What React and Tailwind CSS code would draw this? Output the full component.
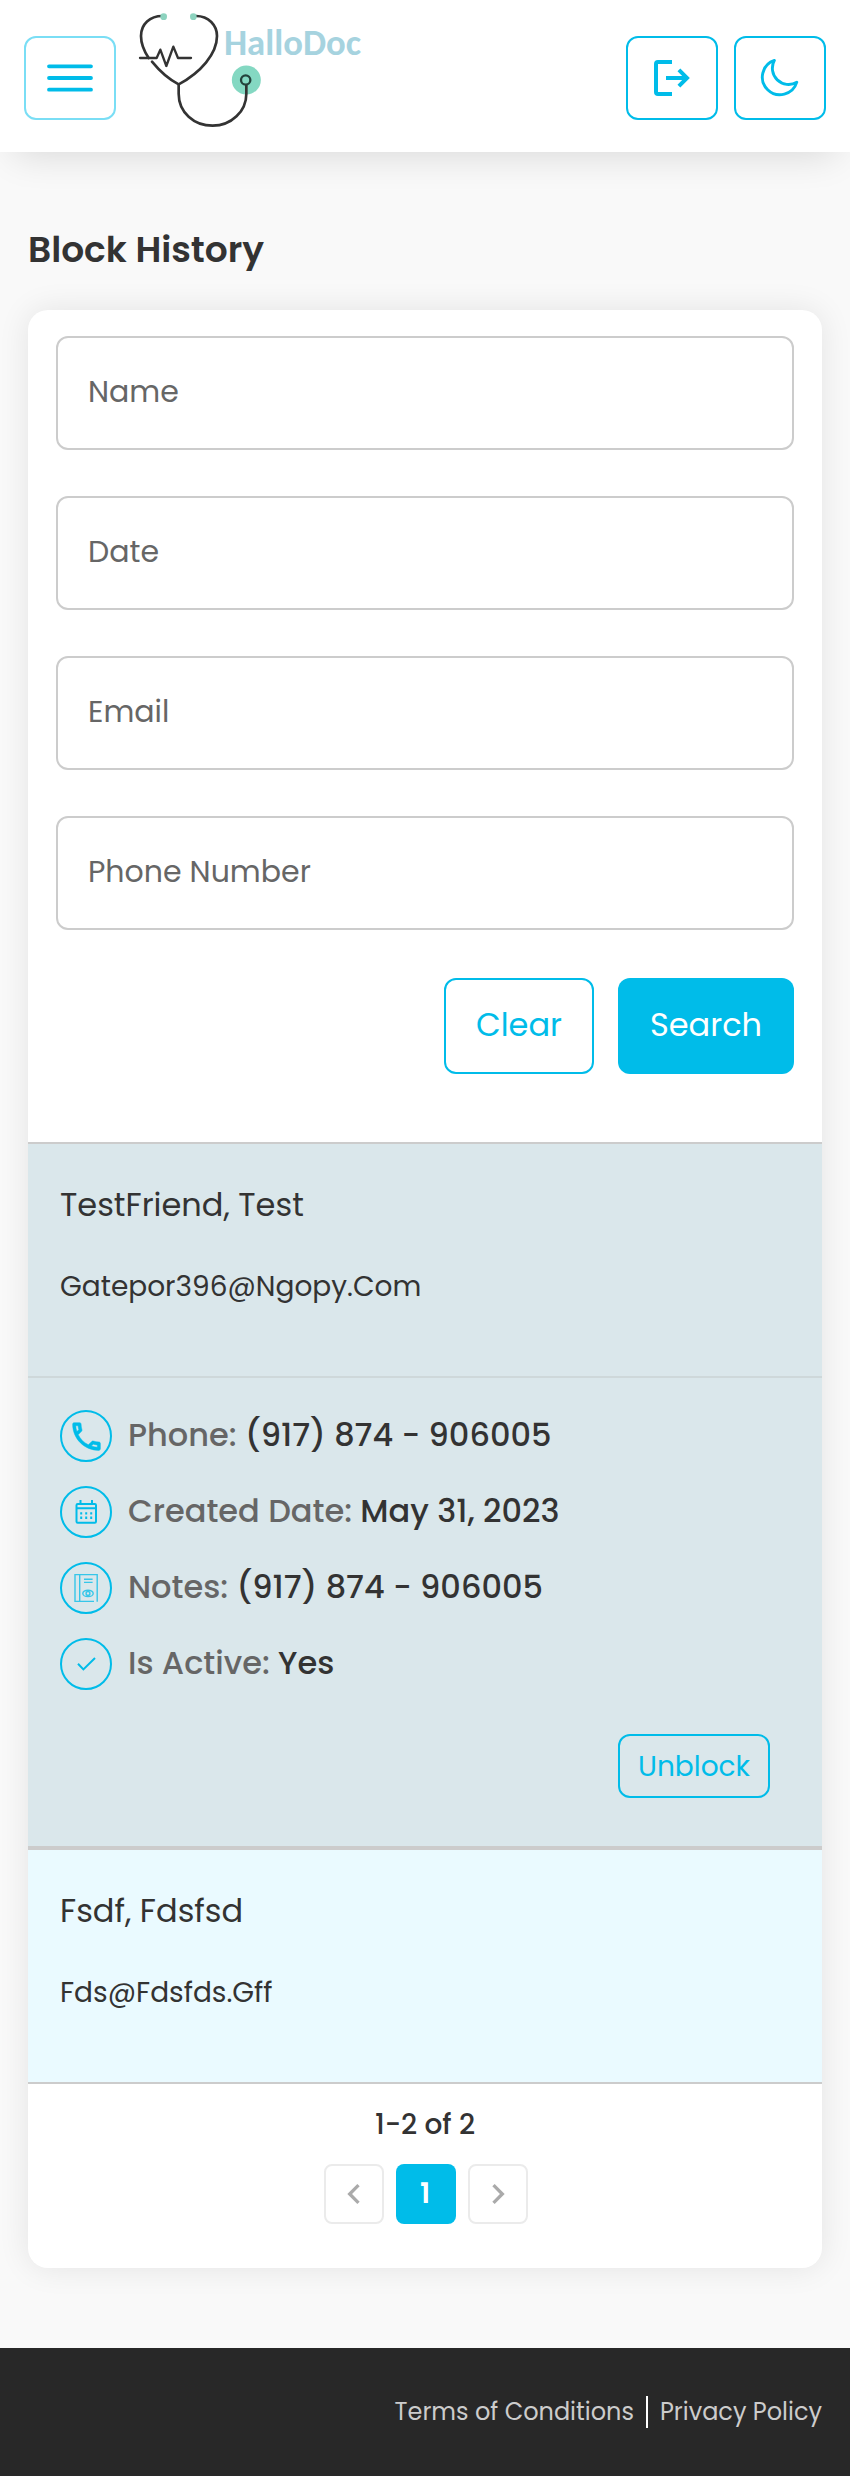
const ICON = "#00bce9";

function Logo() {
  return (
    <svg className="h-[136px] w-[240px]" viewBox="0 -15 720 408" fill="none">
      <circle cx="349" cy="225" r="43.5" fill="#84d8c2" />
      <g stroke="#333333" strokeWidth="8" strokeLinejoin="round">
        <path d="M97 33C60 33 33 57 33 93c0 24 9 45 23 66M66 170c26 32 52 54 80 68" strokeLinecap="round" />
        <path d="M198 33c38 0 63 28 63 60 0 54-50 110-115 145" />
        <path d="M146 238v28c0 56 46 96 102 96s101-43 101-96v-26" />
        <path d="M30 159h50l11-25 18 49 21-58 14 34h39" strokeWidth="7" strokeLinecap="round" />
      </g>
      <circle cx="347" cy="225" r="14" fill="#84d8c2" stroke="#24433c" strokeWidth="7" />
      <circle cx="101" cy="35" r="10" fill="#8dd3bf" />
      <circle cx="190" cy="35" r="10" fill="#8dd3bf" />
      <text x="282" y="151" fill="#a6d3df" fontSize="110" fontWeight="700" fontFamily="Carlito, Calibri, Lato, sans-serif">
        HalloDoc
      </text>
    </svg>
  );
}

function HeaderButton({ label, light, children }) {
  return (
    <button
      aria-label={label}
      className={`flex h-[84px] w-[92px] items-center justify-center rounded-xl border-2 ${light ? "border-[#7adef5]" : "border-[#00bce9]"}`}
    >
      {children}
    </button>
  );
}

function MenuIcon() {
  return (
    <svg className="h-[48px] w-[48px]" viewBox="0 0 48 48" stroke={ICON} strokeWidth="3.8" strokeLinecap="round">
      <path d="M3 12.3h42M3 24h42M3 35.7h42" />
    </svg>
  );
}

function LogoutIcon() {
  return (
    <svg className="h-[48px] w-[48px]" viewBox="0 0 48 48" fill="none" stroke={ICON} strokeWidth="4">
      <path d="M24 8H10q-2 0-2 2v28q0 2 2 2h14" />
      <path d="M18 24h20" />
      <path d="M30.9 15.9l8.1 8.1-8.1 8.1" />
    </svg>
  );
}

function MoonIcon() {
  return (
    <svg className="h-[48px] w-[48px]" viewBox="0 0 48 48" fill="none" stroke={ICON} strokeWidth="2.9" strokeLinejoin="round">
      <path d="M18.4 6.4A16.2 16.2 0 0 0 40.8 28.2A17.6 17.6 0 1 1 18.4 6.4Z" />
    </svg>
  );
}

function PhoneIcon() {
  return (
    <svg className="h-[37px] w-[37px] shrink-0" viewBox="0 0 24 24" fill={ICON} stroke={ICON} strokeWidth="0.3">
      <path d="M6.54 5c.06.89.21 1.76.45 2.59l-1.2 1.2c-.41-1.2-.67-2.47-.76-3.79h1.51m9.86 12.02c.85.24 1.72.39 2.6.45v1.49c-1.32-.09-2.59-.35-3.8-.75l1.2-1.19M7.5 3H4c-.55 0-1 .45-1 1 0 9.39 7.61 17 17 17 .55 0 1-.45 1-1v-3.49c0-.55-.45-1-1-1-1.24 0-2.45-.2-3.57-.57-.1-.04-.21-.05-.31-.05-.26 0-.51.1-.71.29l-2.2 2.2c-2.83-1.45-5.15-3.76-6.59-6.59l2.2-2.2c.28-.28.36-.67.25-1.02C8.7 6.45 8.5 5.25 8.5 4c0-.55-.45-1-1-1z" />
    </svg>
  );
}

function CalendarIcon() {
  return (
    <svg className="h-[32px] w-[32px] shrink-0" viewBox="0 0 32 32" fill="none" stroke={ICON} strokeWidth="2">
      <rect x="6.5" y="8" width="19.5" height="18.8" rx="1.2" />
      <path d="M6.5 12.2h19.5M10.5 4v4M22 4v4" />
      <path d="M10.2 17.4h2M15.2 17.4h2M20.2 17.4h2M10.2 21.8h2M15.2 21.8h2M20.2 21.8h2" strokeWidth="2.4" />
    </svg>
  );
}

function NotesIcon() {
  return (
    <svg className="h-[32px] w-[32px] shrink-0" viewBox="0 0 32 32" fill="none" stroke={ICON} strokeWidth="1.4" opacity="0.75">
      <path d="M24 29.4H5V2.6h22.2v27.2M9.7 2.6v26.8M14 7.3h8.6M14 10.4h8.6" />
      <ellipse cx="18" cy="21.4" rx="5.2" ry="3.2" />
      <circle cx="18" cy="21.4" r="1.9" />
    </svg>
  );
}

function CheckIcon() {
  return (
    <svg className="h-[32px] w-[32px] shrink-0" viewBox="0 0 32 32" fill="none" stroke={ICON} strokeWidth="2">
      <path d="M8 15.8l5.4 5.6L25 10" />
    </svg>
  );
}

function Field({ label }) {
  return (
    <div className="flex h-[114px] items-center rounded-xl border-2 border-[#cccccc] pb-[3px] pl-[30px] text-[30px] text-[#666666]">
      {label}
    </div>
  );
}

function Summary({ name, email }) {
  return (
    <div className="flex h-[232px] flex-col px-8 pt-[37px]">
      <div className="text-[32px] leading-[48px]">{name}</div>
      <div className="mt-[37px] text-[28px] leading-[42px]">{email}</div>
    </div>
  );
}

function Detail({ icon, label, value }) {
  return (
    <div className="flex items-center gap-4">
      <div className="flex h-[52px] w-[52px] items-center justify-center rounded-full border-2 border-[#00bce9]">{icon}</div>
      <div className="pb-[2px] text-[32px] leading-[48px] font-medium whitespace-pre">
        <span className="text-[#666666]">{label}</span> {value}
      </div>
    </div>
  );
}

function Chevron({ d }) {
  return (
    <svg className="h-10 w-10 shrink-0" viewBox="0 0 24 24" fill="#aaaaaa">
      <path d={d} />
    </svg>
  );
}

export default function App() {
  return (
    <div className="flex min-h-[2476px] flex-col bg-[#f9f9f9] font-['Poppins','Inter',sans-serif] text-[#333333]">
      <header className="flex h-[152px] items-start bg-white px-6 shadow-[0_16px_36px_-14px_rgba(0,0,0,0.14)]">
        <div className="pt-9">
          <HeaderButton label="Menu" light>
            <MenuIcon />
          </HeaderButton>
        </div>
        <div className="ml-[14px]">
          <Logo />
        </div>
        <div className="ml-auto flex gap-4 pt-9">
          <HeaderButton label="Log out">
            <LogoutIcon />
          </HeaderButton>
          <HeaderButton label="Dark mode">
            <MoonIcon />
          </HeaderButton>
        </div>
      </header>

      <main className="px-7 pt-[71px]">
        <h1 className="text-[36px] leading-[54px] font-semibold">Block History</h1>

        <section className="mt-[33px] h-[1958px] rounded-[20px] bg-white pt-[26px] shadow-[0_0_32px_rgba(0,0,0,0.09)]">
          <div className="flex flex-col gap-[46px] px-7">
            <Field label="Name" />
            <Field label="Date" />
            <Field label="Email" />
            <Field label="Phone Number" />
          </div>

          <div className="mt-12 flex justify-end gap-6 px-7 text-[32px]">
            <button className="h-24 w-[150px] rounded-xl border-2 border-[#00bce9] pb-[3px] text-[#00bce9]">Clear</button>
            <button className="h-24 w-44 rounded-xl bg-[#00bce9] pb-[3px] text-white">Search</button>
          </div>

          <div className="mt-[68px] border-t-2 border-[#cccccc] bg-[#dae7eb]">
            <Summary name="TestFriend, Test" email="Gatepor396@Ngopy.Com" />
            <div className="flex h-[470px] flex-col border-t-2 border-[#ced8da] px-8 pt-8">
              <div className="flex flex-col gap-6">
                <Detail icon={<PhoneIcon />} label="Phone:" value="(917) 874 - 906005" />
                <Detail icon={<CalendarIcon />} label="Created Date:" value="May 31, 2023" />
                <Detail icon={<NotesIcon />} label="Notes:" value="(917) 874 - 906005" />
                <Detail icon={<CheckIcon />} label="Is Active:" value="Yes" />
              </div>
              <button className="mt-11 mr-5 h-16 w-[152px] self-end rounded-xl border-2 border-[#00bce9] pt-px text-[28px] text-[#00bce9]">
                Unblock
              </button>
            </div>
          </div>
          <div className="border-t-4 border-b-2 border-[#cccccc] bg-[#eafaff]">
            <Summary name="Fsdf, Fdsfsd" email="Fds@Fdsfds.Gff" />
          </div>

          <div className="pt-5 text-center text-[28px] leading-[42px] font-medium">1-2 of 2</div>
          <nav className="mt-[18px] flex justify-center gap-3 pl-[2px]">
            <button aria-label="Previous" className="flex h-[60px] w-[60px] items-center justify-center rounded-lg border-2 border-[#ebebeb]">
              <Chevron d="M15.41 7.41 14 6l-6 6 6 6 1.41-1.41L10.83 12z" />
            </button>
            <button className="flex h-[60px] w-[60px] items-center justify-center rounded-lg bg-[#00bce9] pr-[2px] text-[28px] font-semibold text-white">
              1
            </button>
            <button aria-label="Next" className="flex h-[60px] w-[60px] items-center justify-center rounded-lg border-2 border-[#ebebeb]">
              <Chevron d="M10 6 8.59 7.41 13.17 12l-4.58 4.59L10 18l6-6z" />
            </button>
          </nav>
        </section>
      </main>

      <footer className="mt-20 flex h-32 items-center justify-end bg-[#282828] px-7 text-[24px] text-[#cccccc]">
        <span>Terms of Conditions</span>
        <span className="mx-3 h-8 w-[2px] bg-white" />
        <span>Privacy Policy</span>
      </footer>
    </div>
  );
}
